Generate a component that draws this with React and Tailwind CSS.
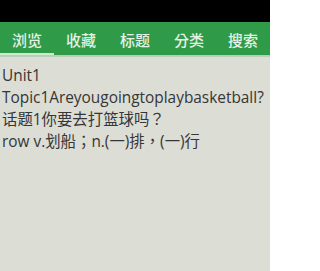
import React from 'react';

const tabs = ['浏览', '收藏', '标题', '分类', '搜索'];

const lines = [
  'Unit1',
  'Topic1Areyougoingtoplaybasketball?',
  '话题1你要去打篮球吗？',
  'row v.划船；n.(一)排，(一)行',
];

export default function App() {
  return (
    <div
      className="w-[270px] h-[271px] bg-[#dcddd5] overflow-hidden flex flex-col"
      style={{ fontFamily: '"Open Sans", "Noto Sans CJK TC", sans-serif' }}
    >
      <div className="h-[22px] bg-black" />
      <div className="h-[33px] bg-[#2f9a48] flex">
        {tabs.map((t, i) => (
          <div key={t} className="flex-1 flex flex-col">
            <div className="flex-1 flex items-center justify-center pt-[6px] text-[15px] font-medium text-[#e4f2e4]">{t}</div>
            <div className={`h-[2px] ${i === 0 ? 'bg-[#cfe8cf]' : 'bg-transparent'}`} />
          </div>
        ))}
      </div>
      <div className="h-[2px] bg-[#b9cdb8]" />
      <div className="px-[2px] pt-[8px] text-[15.4px] leading-[22px] text-[#363636]">
        {lines.map((l) => (
          <div key={l} className="whitespace-nowrap">{l}</div>
        ))}
      </div>
    </div>
  );
}
